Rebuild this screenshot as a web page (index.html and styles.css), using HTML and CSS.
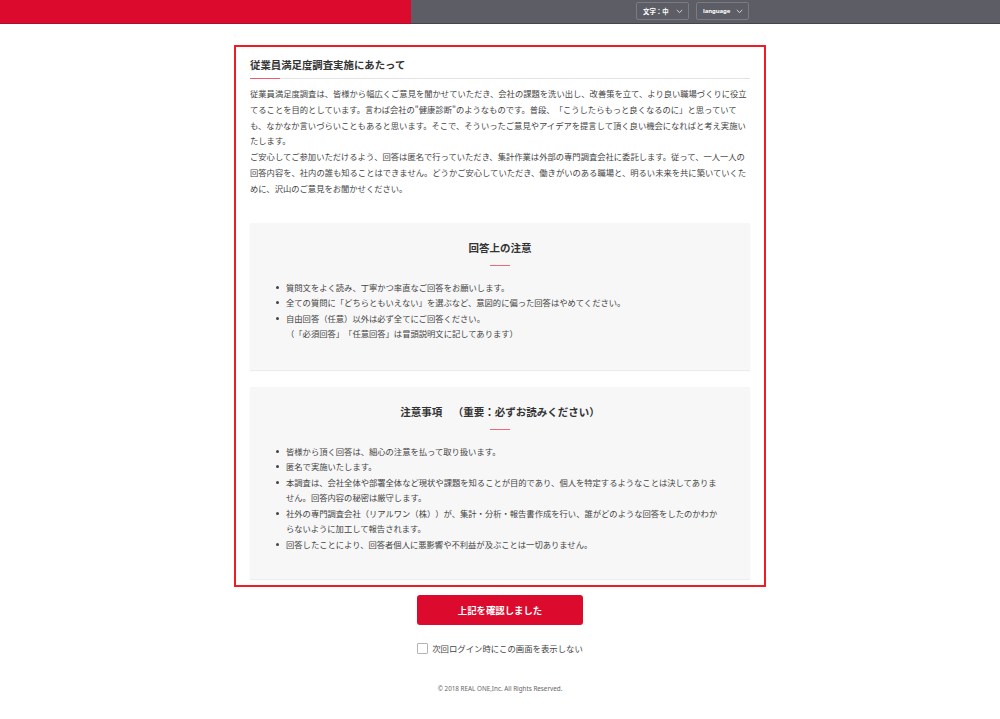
FILE: index.html
```html
<!DOCTYPE html>
<html lang="ja">
<head>
<meta charset="utf-8">
<title>従業員満足度調査実施にあたって</title>
<link rel="stylesheet" href="styles.css">
</head>
<body>
<header class="topbar">
  <div class="brand"></div>
  <div class="bar">
    <div class="select select-size">
      <span>文字：中</span>
      <svg class="chev" width="7" height="5" viewBox="0 0 7 5"><path d="M0.8 1 L3.5 3.6 L6.2 1" fill="none" stroke="#e6e6e6" stroke-width="0.9"/></svg>
    </div>
    <div class="select select-lang">
      <span>language</span>
      <svg class="chev" width="7" height="5" viewBox="0 0 7 5"><path d="M0.8 1 L3.5 3.6 L6.2 1" fill="none" stroke="#e6e6e6" stroke-width="0.9"/></svg>
    </div>
  </div>
</header>

<main class="notice">
  <h2 class="notice-title">従業員満足度調査実施にあたって</h2>
  <p class="intro">従業員満足度調査は、皆様から幅広くご意見を聞かせていただき、会社の課題を洗い出し、改善策を立て、より良い職場づくりに役立てることを目的としています。言わば会社の"健康診断"のようなものです。普段、「こうしたらもっと良くなるのに」と思っていて<br>も、なかなか言いづらいこともあると思います。そこで、そういったご意見やアイデアを提言して頂く良い機会になればと考え実施いたします。<br>ご安心してご参加いただけるよう、回答は匿名で行っていただき、集計作業は外部の専門調査会社に委託します。従って、一人一人の回答内容を、社内の誰も知ることはできません。どうかご安心していただき、働きがいのある職場と、明るい未来を共に築いていくために、沢山のご意見をお聞かせください。</p>

  <section class="panel">
    <h3 class="panel-title">回答上の注意</h3>
    <ul class="points">
      <li>質問文をよく読み、丁寧かつ率直なご回答をお願いします。</li>
      <li>全ての質問に「どちらともいえない」を選ぶなど、意図的に偏った回答はやめてください。</li>
      <li><span>自由回答（任意）以外は必ず全てにご回答ください。<br>（「必須回答」「任意回答」は冒頭説明文に記してあります）</span></li>
    </ul>
  </section>

  <section class="panel panel-second">
    <h3 class="panel-title">注意事項　（重要：必ずお読みください）</h3>
    <ul class="points">
      <li>皆様から頂く回答は、細心の注意を払って取り扱います。</li>
      <li>匿名で実施いたします。</li>
      <li>本調査は、会社全体や部署全体など現状や課題を知ることが目的であり、個人を特定するようなことは決してありません。回答内容の秘密は厳守します。</li>
      <li>社外の専門調査会社（リアルワン（株））が、集計・分析・報告書作成を行い、誰がどのような回答をしたのかわからないように加工して報告されます。</li>
      <li>回答したことにより、回答者個人に悪影響や不利益が及ぶことは一切ありません。</li>
    </ul>
  </section>
</main>

<button class="confirm" type="button">上記を確認しました</button>

<label class="skip">
  <input type="checkbox" class="skip-box">
  <span>次回ログイン時にこの画面を表示しない</span>
</label>

<footer class="copy">© 2018 REAL ONE,Inc. All Rights Reserved.</footer>
</body>
</html>
```

FILE: styles.css
```css
html, body {
  margin: 0;
  padding: 0;
  background: #ffffff;
}

body {
  font-family: "Noto Sans CJK JP", "Noto Sans", sans-serif;
  color: #444444;
  text-spacing-trim: space-all;
}

/* ---------- top bar ---------- */
.topbar {
  display: flex;
  height: 24px;
}

.brand {
  width: 411px;
  background: #dc0a2d;
  border-bottom: 1px solid #a8122c;
}

.bar {
  flex: 1;
  display: flex;
  justify-content: flex-end;
  align-items: center;
  gap: 7px;
  padding-right: 251px;
  padding-bottom: 1px;
  background: #5d5d65;
  border-bottom: 1px solid #44444b;
}

.select {
  display: flex;
  align-items: center;
  justify-content: space-between;
  box-sizing: border-box;
  width: 53px;
  height: 18px;
  padding: 0 5px 0 6px;
  border: 1px solid #7b7b83;
  border-radius: 2px;
  color: #ffffff;
  font-weight: bold;
}

.select-size span {
  font-size: 6.4px;
}

.select-lang span {
  font-family: "Noto Sans", sans-serif;
  font-size: 6px;
  letter-spacing: -0.1px;
}

.chev {
  display: block;
}

/* ---------- notice box ---------- */
.notice {
  display: block;
  box-sizing: border-box;
  width: 532px;
  margin: 21px auto 0;
  padding: 10px 14px 6px;
  border: 2px solid #ee1c25;
}

.notice-title {
  margin: 0;
  padding-bottom: 7px;
  font-size: 10.4px;
  line-height: 15px;
  font-weight: bold;
  color: #333333;
  background:
    linear-gradient(#ee5b6f, #ee5b6f) left bottom / 30px 1px no-repeat,
    linear-gradient(#e2e2e2, #e2e2e2) left bottom / 100% 1px no-repeat;
}

.intro {
  margin: 7px 0 0;
  font-size: 8.3px;
  line-height: 15.8px;
}

/* ---------- panels ---------- */
.panel {
  margin-top: 26px;
  padding: 17px 26px 28px 0;
  background: #f7f7f7;
  box-shadow: 0 1px 1px rgba(0, 0, 0, 0.07);
}

.panel-second {
  margin-top: 17px;
  padding-bottom: 27px;
}

.panel-title {
  margin: 0;
  padding-left: 26px;
  text-align: center;
  font-size: 10.5px;
  line-height: 15px;
  font-weight: bold;
  color: #333333;
}

.panel-title::after {
  content: "";
  display: block;
  width: 20px;
  height: 1px;
  margin: 10px auto 0;
  background: #ee6a7b;
}

.points {
  margin: 14px 0 0;
  padding: 0;
  list-style: none;
}

.points li {
  display: flex;
  font-size: 8.3px;
  line-height: 15.5px;
}

.points li::before {
  content: "";
  flex: none;
  width: 3px;
  height: 3px;
  margin: 6.3px 7px 0 26px;
  border-radius: 50%;
  background: #444444;
}

/* ---------- actions ---------- */
.confirm {
  display: block;
  width: 166px;
  height: 30px;
  margin: 8px auto 0;
  border: none;
  border-radius: 3px;
  background: #dc0a2d;
  color: #ffffff;
  font-family: "Noto Sans CJK JP", sans-serif;
  font-size: 9.4px;
  font-weight: bold;
}

.skip {
  display: flex;
  justify-content: center;
  align-items: center;
  gap: 4px;
  margin-top: 17px;
  font-size: 8.4px;
  line-height: 12px;
  color: #444444;
}

.skip-box {
  -webkit-appearance: none;
  appearance: none;
  box-sizing: border-box;
  width: 11px;
  height: 11px;
  margin: 0;
  border: 1px solid #b4b4b4;
  border-radius: 1px;
  background: #ffffff;
}

.copy {
  margin-top: 30px;
  text-align: center;
  font-family: "Noto Sans", sans-serif;
  font-size: 6.3px;
  color: #666666;
}
```
